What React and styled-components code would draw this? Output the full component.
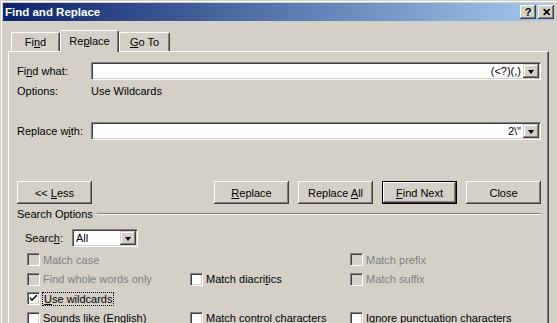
import React from "react";
import styled, { createGlobalStyle } from "styled-components";

const Global = createGlobalStyle`
  body {
    margin: 0;
    background: #d4d0c8;
  }
`;

const Window = styled.div`
  width: 557px;
  height: 323px;
  overflow: hidden;
  box-sizing: border-box;
  padding: 3px 3px 0 3px;
  background: #d4d0c8;
  box-shadow: inset 1px 1px 0 #d4d0c8, inset 2px 2px 0 #fff;
  display: flex;
  flex-direction: column;
  font-family: "Liberation Sans", Arial, sans-serif;
  font-size: 11px;
  color: #000;
`;

const TitleBar = styled.div`
  flex: none;
  height: 18px;
  display: flex;
  align-items: center;
  justify-content: space-between;
  padding: 0 0 0 2px;
  background: linear-gradient(to right, #0a246a, #a6caf0);
`;

const Title = styled.span`
  color: #fff;
  font-weight: bold;
  font-size: 11.5px;
`;

const TitleButtons = styled.div`
  display: flex;
  gap: 2px;
`;

const TitleButton = styled.div`
  width: 16px;
  height: 14px;
  box-sizing: border-box;
  background: #d4d0c8;
  box-shadow: inset -1px -1px #404040, inset 1px 1px #fff, inset -2px -2px #808080;
  display: flex;
  align-items: center;
  justify-content: center;
  font-weight: bold;
  font-size: 11px;
  line-height: 1;
`;

const Body = styled.div`
  flex: 1 0 auto;
  display: flex;
  flex-direction: column;
  padding: 9px 5px 0 5px;
`;

const TabStrip = styled.div`
  flex: none;
  display: flex;
  align-items: flex-end;
  height: 21px;
  padding-left: 3px;
`;

const Tab = styled.div`
  width: ${(p) => p.$w}px;
  height: ${(p) => (p.$active ? 22 : 19)}px;
  margin-bottom: ${(p) => (p.$active ? -1 : 0)}px;
  position: relative;
  z-index: ${(p) => (p.$active ? 1 : 0)};
  box-sizing: border-box;
  background: #d4d0c8;
  border-top: 1px solid #fff;
  border-left: 1px solid #fff;
  border-right: 1px solid #404040;
  border-radius: 2px 2px 0 0;
  box-shadow: inset -1px 0 #808080;
  display: flex;
  align-items: center;
  justify-content: center;
  padding-bottom: ${(p) => (p.$active ? 2 : 0)}px;
`;

const Panel = styled.div`
  flex: 1 0 auto;
  border-top: 1px solid #fff;
  border-left: 1px solid #fff;
  border-right: 1px solid #404040;
  box-shadow: inset -1px 0 #808080;
  padding: 10px 0 0 8px;
  display: flex;
  flex-direction: column;
`;

const FieldRow = styled.div`
  display: grid;
  grid-template-columns: 74px 450px;
  align-items: center;
  height: ${(p) => p.$h || 18}px;
  margin-top: ${(p) => p.$mt || 0}px;
`;

const Combo = styled.div`
  width: ${(p) => p.$w}px;
  height: 18px;
  box-sizing: border-box;
  display: flex;
  align-items: center;
  background: #fff;
  border: 1px solid;
  border-color: #808080 #fff #fff #808080;
  box-shadow: inset 1px 1px #404040, inset -1px -1px #d4d0c8;
  padding: 1px;
`;

const ComboText = styled.span`
  flex: 1;
  text-align: ${(p) => (p.$left ? "left" : "right")};
  padding: 0 2px;
  white-space: nowrap;
`;

const DropButton = styled.div`
  width: 16px;
  height: 14px;
  flex: none;
  box-sizing: border-box;
  background: #d4d0c8;
  box-shadow: inset -1px -1px #404040, inset 1px 1px #d4d0c8, inset -2px -2px #808080, inset 2px 2px #fff;
  display: flex;
  align-items: center;
  justify-content: center;
  &::after {
    content: "";
    border-left: 3.5px solid transparent;
    border-right: 3.5px solid transparent;
    border-top: 4px solid #000;
    margin-top: 1px;
  }
`;

const ButtonRow = styled.div`
  display: flex;
  justify-content: space-between;
  width: 524px;
  margin-top: 41px;
`;

const ButtonGroup = styled.div`
  display: flex;
  gap: 9px;
`;

const Button = styled.div`
  width: 75px;
  height: 23px;
  box-sizing: border-box;
  background: #d4d0c8;
  display: flex;
  align-items: center;
  justify-content: center;
  white-space: pre;
  border: ${(p) => (p.$default ? "1px solid #000" : "none")};
  box-shadow: inset -1px -1px #404040, inset 1px 1px #fff, inset -2px -2px #808080;
`;

const GroupHeader = styled.div`
  display: flex;
  align-items: center;
  width: 524px;
  height: 14px;
  margin-top: 3px;
`;

const GroupLine = styled.div`
  flex: 1;
  margin-left: 4px;
  border-top: 1px solid #808080;
  border-bottom: 1px solid #fff;
`;

const SearchRow = styled.div`
  display: flex;
  align-items: center;
  margin-top: 8px;
  padding-left: 8px;
`;

const SearchLabel = styled.span`
  width: 47px;
`;

const Checks = styled.div`
  display: grid;
  grid-template-columns: 163px 160px 1fr;
  grid-auto-rows: 19.5px;
  align-items: center;
  padding-left: 10px;
  margin-top: 3px;
`;

const CheckItem = styled.div`
  display: flex;
  align-items: center;
  gap: 3px;
  color: ${(p) => (p.$disabled ? "#808080" : "#000")};
  white-space: nowrap;
`;

const Box = styled.div`
  width: 13px;
  height: 13px;
  box-sizing: border-box;
  flex: none;
  background: ${(p) => (p.$disabled ? "#d4d0c8" : "#fff")};
  border: 1px solid;
  border-color: #808080 #fff #fff #808080;
  box-shadow: inset 1px 1px #404040, inset -1px -1px #d4d0c8;
  display: flex;
  align-items: center;
  justify-content: center;
`;

const Focus = styled.span`
  outline: 1px dotted #000;
  padding: 0 1px;
`;

const U = styled.span`
  text-decoration: underline;
`;

const Check = ({ label, disabled, checked, focused, col }) => (
  <CheckItem $disabled={disabled} style={col ? { gridColumn: col } : undefined}>
    <Box $disabled={disabled}>
      {checked && (
        <svg width="7" height="7" viewBox="0 0 7 7">
          <path d="M0 2 L0 4 L2 6 L7 1 L7 -1 L2 4 Z" fill="#000" />
        </svg>
      )}
    </Box>
    {focused ? <Focus>{label}</Focus> : <span>{label}</span>}
  </CheckItem>
);

export default function App() {
  return (
    <Window>
      <Global />
      <TitleBar>
        <Title>Find and Replace</Title>
        <TitleButtons>
          <TitleButton>?</TitleButton>
          <TitleButton>✕</TitleButton>
        </TitleButtons>
      </TitleBar>
      <Body>
        <TabStrip>
          <Tab $w={49}><span>Fi<U>n</U>d</span></Tab>
          <Tab $w={59} $active><span>Re<U>p</U>lace</span></Tab>
          <Tab $w={51}><span><U>G</U>o To</span></Tab>
        </TabStrip>
        <Panel>
          <FieldRow>
            <span>Fi<U>n</U>d what:</span>
            <Combo $w={450}>
              <ComboText>(&lt;?)(,)</ComboText>
              <DropButton />
            </Combo>
          </FieldRow>
          <FieldRow $h={14} $mt={4}>
            <span>Options:</span>
            <span>Use Wildcards</span>
          </FieldRow>
          <FieldRow $mt={24}>
            <span>Replace w<U>i</U>th:</span>
            <Combo $w={450}>
              <ComboText>2\"</ComboText>
              <DropButton />
            </Combo>
          </FieldRow>
          <ButtonRow>
            <Button><span>&lt;&lt; <U>L</U>ess</span></Button>
            <ButtonGroup>
              <Button><span><U>R</U>eplace</span></Button>
              <Button><span>Replace <U>A</U>ll</span></Button>
              <Button $default><span><U>F</U>ind Next</span></Button>
              <Button><span>Close</span></Button>
            </ButtonGroup>
          </ButtonRow>
          <GroupHeader>
            <span>Search Options</span>
            <GroupLine />
          </GroupHeader>
          <SearchRow>
            <SearchLabel>Searc<U>h</U>:</SearchLabel>
            <Combo $w={66}>
              <ComboText $left>All</ComboText>
              <DropButton />
            </Combo>
          </SearchRow>
          <Checks>
            <Check label="Match case" disabled />
            <Check label="Match prefix" disabled col={3} />
            <Check label="Find whole words only" disabled />
            <Check label={<>Match diacri<U>t</U>ics</>} />
            <Check label="Match suffix" disabled />
            <Check label={<><U>U</U>se wildcards</>} checked focused />
            <span />
            <span />
            <Check label={<>Sounds li<U>k</U>e (English)</>} />
            <Check label={<>Match <U>c</U>ontrol characters</>} />
            <Check label={<>Ignore punctuation character<U>s</U></>} />
          </Checks>
        </Panel>
      </Body>
    </Window>
  );
}
